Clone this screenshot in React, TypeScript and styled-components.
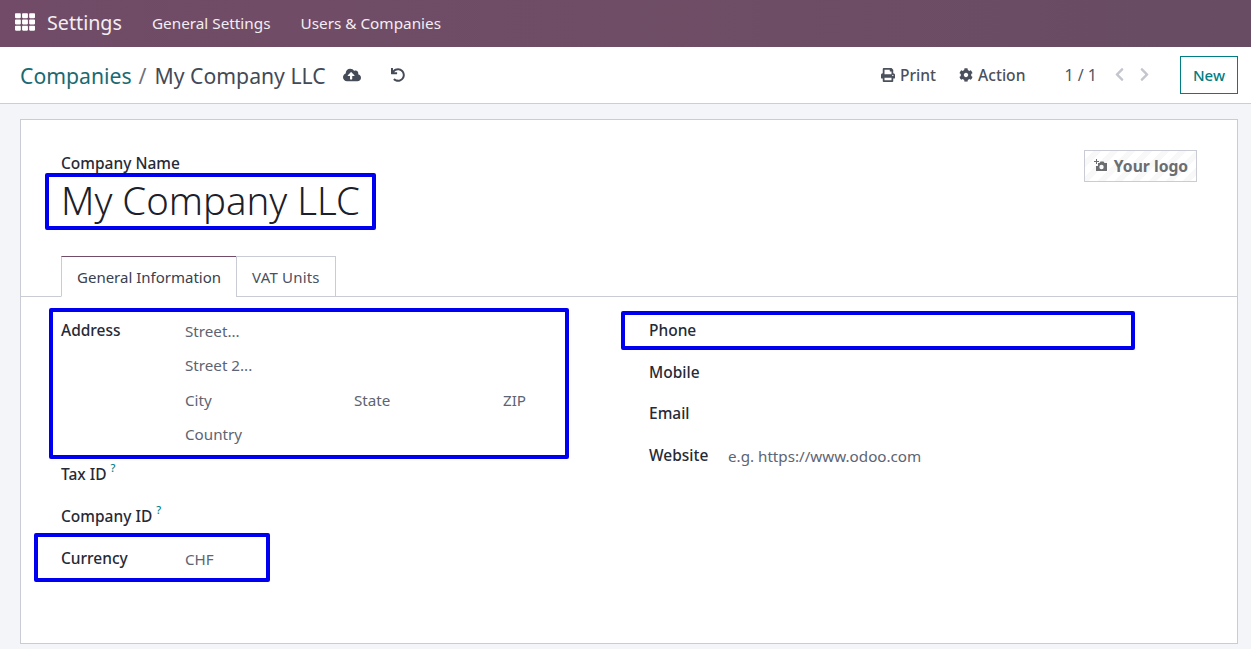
import React from "react";
import styled, { createGlobalStyle } from "styled-components";
import { FaCloudUploadAlt, FaUndo, FaPrint, FaCog, FaChevronLeft, FaChevronRight, FaTh } from "react-icons/fa";

const Global = createGlobalStyle`
  html, body { margin: 0; padding: 0; height: 100%; background: #f4f5f9; overflow: hidden; }
  body { font-family: "Noto Sans", "Open Sans", sans-serif; font-size: 15px; color: #262a36; }
`;
const Page = styled.div`position: relative; width: 1251px; height: 649px; overflow: hidden;`;
const Nav = styled.header`
  height: 47px; display: flex; align-items: center; padding: 0 0 2px 15px; box-sizing: border-box;
  background: linear-gradient(90deg, #714b67 0%, #6f4d66 50%, #674c63 100%); color: #f3eef2;
`;
const AppsIcon = styled.span`display: flex; font-size: 20px; margin-right: 12px; color: #fff; position: relative; top: -1px;`;
const Brand = styled.span`font-size: 19.7px; margin-right: 30px;`;
const NavItem = styled.span`font-size: 15.3px; margin-right: 30px;`;
const Panel = styled.div`
  height: 57px; box-sizing: border-box; background: #fff; border-bottom: 1px solid #ccced6;
  display: flex; align-items: center; padding: 0 13px 0 20px;
`;
const Crumb = styled.span<{ $link?: boolean }>`font-size: 21.2px; color: ${p => p.$link ? "#196a72" : "#434a57"};`;
const Sep = styled.span`font-size: 21.3px; color: #6b7280; margin: 0 8px 0 7px;`;
const IconBtn = styled.span<{ $size?: number; $ml: number }>`display: flex; font-size: ${p => p.$size || 16}px; color: #454b57; margin-left: ${p => p.$ml}px;`;
const Spacer = styled.div`flex: 1;`;
const Tool = styled.span<{ $mr: number }>`display: flex; align-items: center; gap: 5px; font-weight: 500; font-size: 15.6px; color: #4a505c; margin-right: ${p => p.$mr}px;`;
const Pager = styled.span`font-size: 16px; color: #4f5665; margin-right: 15px;`;
const Chevron = styled.span<{ $mr: number }>`display: flex; font-size: 15px; color: #c4c6cd; margin-right: ${p => p.$mr}px; position: relative; top: -1px;`;
const NewBtn = styled.button`
  width: 58px; height: 38px; border: 1px solid #017e84; background: #fff; color: #017e84;
  font: 500 15px "Noto Sans", sans-serif; padding: 0;
`;
const Sheet = styled.main`
  margin: 15px 13px 0 20px; height: 525px; box-sizing: border-box; background: #fff;
  border: 1px solid #c9ccd4; display: flex; flex-direction: column;
`;
const Head = styled.div`display: flex; justify-content: space-between; padding: 33px 40px 0 40px; height: 104px; box-sizing: border-box;`;
const LogoWrap = styled.div`margin-top: -3px;`;
const NameLabel = styled.div`font-weight: 500; font-size: 15.5px; line-height: 20px; color: #262a36;`;
const NameValue = styled.div`font-size: 38.3px; font-weight: 300; line-height: 56px; margin-top: -1px; color: #1b202b;`;
const LogoBox = styled.div`
  width: 113px; height: 32px; box-sizing: border-box; border: 1px solid #c9ccd4; display: flex;
  align-items: center; justify-content: center; gap: 6px; font-weight: 700; font-size: 15.7px; color: #6b6d70;
  background: repeating-linear-gradient(135deg, #fff, #fff 6px, #f8f8f9 6px, #f8f8f9 12px);
`;
const Tabs = styled.div`display: flex; padding: 32px 0 0 40px; height: 73px; box-sizing: border-box; border-bottom: 1px solid #c9ccd4;`;
const Tab = styled.div<{ $active?: boolean }>`
  height: 41px; box-sizing: border-box; padding: 0 15px; display: flex; align-items: center;
  font-size: 15px; letter-spacing: ${p => p.$active ? 0 : 0.2}px; color: ${p => p.$active ? "#39404e" : "#4a5160"}; background: #fff;
  border: 1px solid #c9ccd4; border-top-color: ${p => p.$active ? "#714b67" : "#c9ccd4"};
  border-bottom-color: ${p => p.$active ? "#fff" : "#c9ccd4"}; margin-left: ${p => p.$active ? 0 : -1}px;
`;
const Columns = styled.div`display: grid; grid-template-columns: 588px 1fr; padding: 0 0 0 40px;`;
const Col = styled.div`display: flex; flex-direction: column; padding-top: 23px;`;
const Row = styled.div<{ $h: number }>`display: flex; min-height: ${p => p.$h}px;`;
const Label = styled.div<{ $w: number }>`
  width: ${p => p.$w}px; font-weight: 500; font-size: 15.5px; line-height: 20px; color: #262a36; flex: none; white-space: nowrap;
`;
const Hint = styled.sup`font-size: 11px; color: #017e84; margin-left: 4px; line-height: 0; position: relative; top: -1px; vertical-align: super;`;
const Values = styled.div`display: flex; flex-direction: column;`;
const Value = styled.div<{ $h?: number }>`font-size: 15.2px; line-height: 20px; height: ${p => p.$h || 20}px; color: #5d6473; margin-top: 1px;`;
const CityRow = styled.div`display: grid; grid-template-columns: 169px 149px auto; height: 33px; font-size: 15.2px; line-height: 20px; color: #5d6473; margin-top: 1px;`;
const Mark = styled.div<{ $x: number; $y: number; $w: number; $h: number }>`
  position: absolute; left: ${p => p.$x}px; top: ${p => p.$y}px; width: ${p => p.$w}px; height: ${p => p.$h}px;
  box-sizing: border-box; border: 4px solid #0000f0; border-radius: 2px; pointer-events: none;
`;

export default function App() {
  return (
    <Page>
      <Global />
      <Nav>
        <AppsIcon><FaTh /></AppsIcon>
        <Brand>Settings</Brand>
        <NavItem>General Settings</NavItem>
        <NavItem>Users &amp; Companies</NavItem>
      </Nav>
      <Panel>
        <Crumb $link>Companies</Crumb>
        <Sep>/</Sep>
        <Crumb>My Company LLC</Crumb>
        <IconBtn $size={18} $ml={17}><FaCloudUploadAlt /></IconBtn>
        <IconBtn $size={14} $ml={30}><FaUndo /></IconBtn>
        <Spacer />
        <Tool $mr={23}><FaPrint size={14} />Print</Tool>
        <Tool $mr={39}><FaCog size={14} />Action</Tool>
        <Pager>1 / 1</Pager>
        <Chevron $mr={10}><FaChevronLeft /></Chevron>
        <Chevron $mr={28}><FaChevronRight /></Chevron>
        <NewBtn>New</NewBtn>
      </Panel>
      <Sheet>
        <Head>
          <div>
            <NameLabel>Company Name</NameLabel>
            <NameValue>My Company LLC</NameValue>
          </div>
          <LogoWrap>
            <LogoBox>
              <svg width="15" height="14" viewBox="0 0 15 14" fill="#6b6d70">
                <path d="M3 0h1v2h2v1H4v2H3V3H1V2h2zM5 4h1.500l1-1.500h3L11.500 4H14v8H3V7h2zm3.500 1.800a2.200 2.200 0 1 0 0 4.400 2.200 2.200 0 0 0 0-4.400z" />
              </svg>
              Your logo
            </LogoBox>
          </LogoWrap>
        </Head>
        <Tabs>
          <Tab $active>General Information</Tab>
          <Tab>VAT Units</Tab>
        </Tabs>
        <Columns>
          <Col>
            <Row $h={143.500}>
              <Label $w={124}>Address</Label>
              <Values>
                <Value $h={33}>Street...</Value>
                <Value $h={34}>Street 2...</Value>
                <CityRow><span>City</span><span>State</span><span>ZIP</span></CityRow>
                <Value>Country</Value>
              </Values>
            </Row>
            <Row $h={42}><Label $w={124}>Tax ID<Hint>?</Hint></Label></Row>
            <Row $h={42}><Label $w={124}>Company ID<Hint>?</Hint></Label></Row>
            <Row $h={30}><Label $w={124}>Currency</Label><Value>CHF</Value></Row>
          </Col>
          <Col>
            <Row $h={41.500}><Label $w={79}>Phone</Label></Row>
            <Row $h={41.500}><Label $w={79}>Mobile</Label></Row>
            <Row $h={41.500}><Label $w={79}>Email</Label></Row>
            <Row $h={30}><Label $w={79}>Website</Label><Value>e.g. https://www.odoo.com</Value></Row>
          </Col>
        </Columns>
      </Sheet>
      <Mark $x={45} $y={173} $w={331} $h={57} />
      <Mark $x={49} $y={308} $w={520} $h={151} />
      <Mark $x={621} $y={311} $w={514} $h={39} />
      <Mark $x={34} $y={533} $w={236} $h={49} />
    </Page>
  );
}
